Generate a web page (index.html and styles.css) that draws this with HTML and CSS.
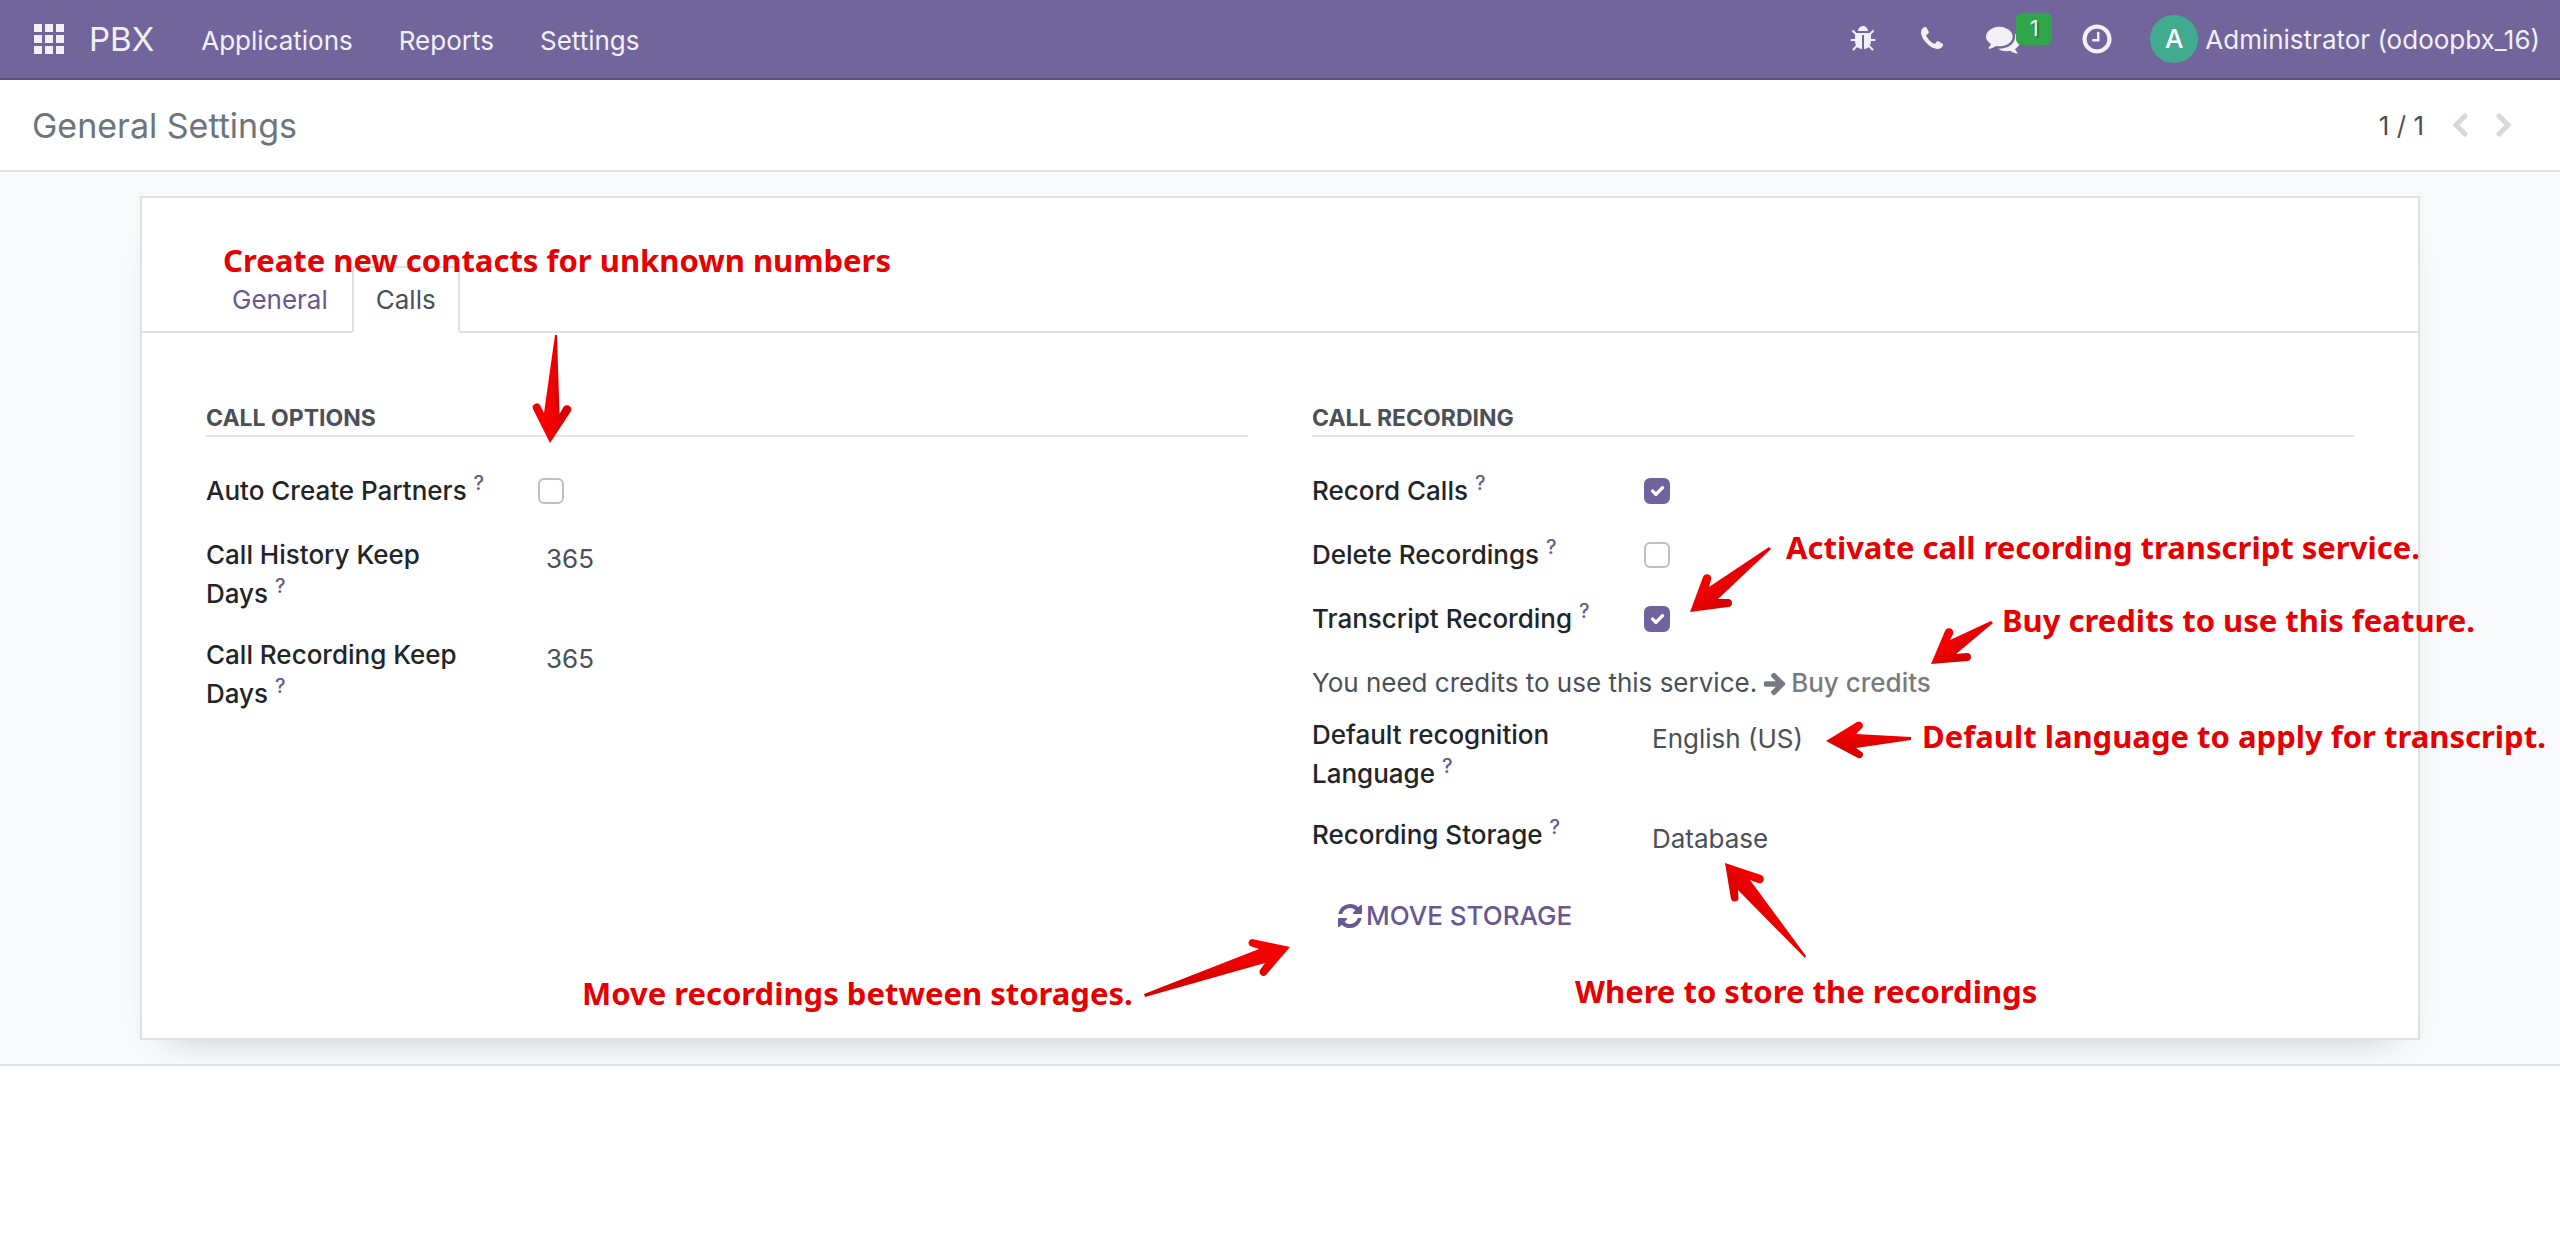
FILE: index.html
```html
<!DOCTYPE html>
<html lang="en">
<head>
<meta charset="utf-8">
<title>General Settings - PBX</title>
<link rel="stylesheet" href="styles.css">
</head>
<body>
<header class="navbar">
  <nav class="nav-main" aria-label="Main">
    <button class="apps" type="button" aria-label="Home menu">
      <svg class="icon-apps" viewBox="0 0 30 30"><path d="M0 0h8v8H0zM11 0h8v8h-8zM22 0h8v8h-8zM0 11h8v8H0zM11 11h8v8h-8zM22 11h8v8h-8zM0 22h8v8H0zM11 22h8v8h-8zM22 22h8v8h-8z"/></svg>
    </button>
    <a class="brand" href="#">PBX</a>
    <a class="nav-link" href="#">Applications</a>
    <a class="nav-link" href="#">Reports</a>
    <a class="nav-link" href="#">Settings</a>
  </nav>
  <div class="systray">
    <button class="tray" type="button" aria-label="Debug"><svg class="icon-28" viewBox="0 0 1792 1792"><path d="M1632 960q0 26-19 45t-45 19h-224q0 171-67 290l208 209q19 19 19 45t-19 45q-18 19-45 19t-45-19l-198-197q-5 5-15 13t-42 28.5-65 36.5-82 29-97 13v-896h-128v896q-51 0-101.5-13.5t-87-33-66-39-43.5-32.5l-15-14-183 207q-20 21-48 21-24 0-43-16-19-18-20.5-44.5t15.5-46.5l202-227q-58-114-58-274h-224q-26 0-45-19t-19-45 19-45 45-19h224v-294l-173-173q-19-19-19-45t19-45 45-19 45 19l173 173h844l173-173q19-19 45-19t45 19 19 45-19 45l-173 173v294h224q26 0 45 19t19 45zm-480-576h-640q0-133 93.5-226.5t226.5-93.5 226.5 93.5 93.5 226.5z"/></svg></button>
    <button class="tray" type="button" aria-label="Phone"><svg class="icon-28" viewBox="0 0 1792 1792"><path d="M1600 1240q0 27-10 70.5t-21 68.5q-21 50-122 106-94 51-186 51-27 0-53-3.5t-57.5-12.5-47-14.5-55.5-20.5-49-18q-98-35-175-83-127-79-264-216t-216-264q-48-77-83-175-3-9-18-49t-20.5-55.5-14.5-47-12.5-57.5-3.5-53q0-92 51-186 56-101 106-122 25-11 68.5-21t70.5-10q14 0 21 3 18 6 53 76 11 19 30 54t35 63.5 31 53.5q3 4 17.5 25t21.5 35.5 7 28.5q0 20-28.5 50t-62 55-62 53-28.5 46q0 9 5 22.5t8.5 20.5 14 24 11.5 19q76 137 174 235t235 174q2 1 19 11.5t24 14 20.5 8.5 22.5 5q18 0 46-28.5t53-62 55-62 50-28.5q14 0 28.5 7t35.5 21.5 25 17.5q25 15 53.5 31t63.5 35 54 30q70 35 76 53 3 7 3 21z"/></svg></button>
    <button class="tray" type="button" aria-label="Messages"><svg class="icon-34" viewBox="0 0 1792 1792"><path d="M1408 768q0 139-94 257t-256.5 186.5-353.5 68.5q-86 0-176-16-124 88-278 128-36 9-86 16h-3q-11 0-20.5-8t-11.5-21q-1-3-1-6.5t.5-6.5 2-6l2.5-5 3.5-5.5 4-5 4.5-5 4-4.5q5-6 23-25t26-29.5 22.5-29 25-38.5 20.5-44q-124-72-195-177t-71-224q0-139 94-257t256.5-186.5 353.5-68.5 353.5 68.5 256.5 186.5 94 257zm384 256q0 120-71 224.5t-195 176.5q10 24 20.5 44t25 38.5 22.5 29 26 29.5 23 25q1 1 4 4.5t4.5 5 4 5 3.5 5.5l2.5 5 2 6 .5 6.5-1 6.5q-3 14-13 22t-22 7q-50-7-86-16-154-40-278-128-90 16-176 16-271 0-472-132 58 4 88 4 161 0 309-45t264-129q125-92 192-212t67-254q0-77-23-152 129 71 204 178t75 230z"/></svg><span class="badge">1</span></button>
    <button class="tray tray-clock" type="button" aria-label="Activities"><svg class="icon-34" viewBox="0 0 1792 1792"><path d="M1024 544v448q0 14-9 23t-23 9h-320q-14 0-23-9t-9-23v-64q0-14 9-23t23-9h224v-352q0-14 9-23t23-9h64q14 0 23 9t9 23zm416 352q0-148-73-273t-198-198-273-73-273 73-198 198-73 273 73 273 198 198 273 73 273-73 198-198 73-273zm224 0q0 209-103 385.5t-279.5 279.5-385.5 103-385.5-103-279.5-279.5-103-385.5 103-385.5 279.5-279.5 385.5-103 385.5 103 279.5 279.5 103 385.5z"/></svg></button>
    <button class="user" type="button"><span class="avatar">A</span><span>Administrator (odoopbx_16)</span></button>
  </div>
</header>

<div class="control-panel">
  <h1 class="title">General Settings</h1>
  <div class="pager">
    <span class="pager-value">1 / 1</span>
    <button class="pager-btn" type="button" aria-label="Previous"><svg class="icon-chevron" viewBox="0 0 16 24"><path d="M13 3L4 12l9 9"/></svg></button>
    <button class="pager-btn" type="button" aria-label="Next"><svg class="icon-chevron" viewBox="0 0 16 24"><path d="M3 3l9 9-9 9"/></svg></button>
  </div>
</div>

<main class="content">
  <form class="sheet">
    <div class="tabs" role="tablist">
      <a class="tab" role="tab" href="#general">General</a>
      <a class="tab tab-active" role="tab" aria-selected="true" href="#calls">Calls</a>
    </div>
    <div class="groups">
      <section class="group">
        <h2 class="group-title">CALL OPTIONS</h2>
        <div class="row row-check">
          <label class="label" for="auto">Auto Create Partners <sup>?</sup></label>
          <input class="check" type="checkbox" id="auto">
        </div>
        <div class="row">
          <label class="label" for="history">Call History Keep Days <sup>?</sup></label>
          <input class="field" type="text" id="history" value="365">
        </div>
        <div class="row">
          <label class="label" for="keep">Call Recording Keep Days <sup>?</sup></label>
          <input class="field" type="text" id="keep" value="365">
        </div>
      </section>
      <section class="group">
        <h2 class="group-title">CALL RECORDING</h2>
        <div class="row row-check">
          <label class="label" for="record">Record Calls <sup>?</sup></label>
          <input class="check" type="checkbox" id="record" checked>
        </div>
        <div class="row row-check">
          <label class="label" for="delete">Delete Recordings <sup>?</sup></label>
          <input class="check" type="checkbox" id="delete">
        </div>
        <div class="row row-check">
          <label class="label" for="transcript">Transcript Recording <sup>?</sup></label>
          <input class="check" type="checkbox" id="transcript" checked>
        </div>
        <div class="credits">
          <span>You need credits to use this service.</span>
          <a class="buy" href="#"><svg class="icon-26" viewBox="0 0 1792 1792"><path d="M1600 960q0 54-37 91l-651 651q-39 37-91 37-51 0-90-37l-75-75q-38-38-38-91t38-91l293-293h-704q-52 0-84.5-37.5t-32.5-90.5v-128q0-53 32.5-90.5t84.5-37.5h704l-293-294q-38-36-38-90t38-90l75-75q38-38 90-38 53 0 91 38l651 651q37 35 37 90z"/></svg>Buy credits</a>
        </div>
        <div class="row">
          <label class="label" for="language">Default recognition Language <sup>?</sup></label>
          <select class="field" id="language"><option>English (US)</option></select>
        </div>
        <div class="row">
          <label class="label" for="storage">Recording Storage <sup>?</sup></label>
          <select class="field" id="storage"><option>Database</option></select>
        </div>
        <button class="move" type="button"><svg class="icon-28" viewBox="0 0 1792 1792"><path d="M1639 1056q0 5-1 7-64 268-268 434.5t-478 166.5q-146 0-282.5-55t-243.5-157l-129 129q-19 19-45 19t-45-19-19-45v-448q0-26 19-45t45-19h448q26 0 45 19t19 45-19 45l-137 137q71 66 161 102t187 36q134 0 250-65t186-179q11-17 53-117 8-23 30-23h192q13 0 22.5 9.5t9.5 22.5zm25-800v448q0 26-19 45t-45 19h-448q-26 0-45-19t-19-45 19-45l138-138q-148-137-349-137-134 0-250 65t-186 179q-11 17-53 117-8 23-30 23h-199q-13 0-22.5-9.5t-9.5-22.5v-7q65-268 270-434.5t480-166.5q146 0 284 55.5t245 156.5l130-129q19-19 45-19t45 19 19 45z"/></svg>MOVE STORAGE</button>
      </section>
    </div>
  </form>
</main>

<!-- Callouts drawn over the form -->
<div class="notes">
  <p class="note note-contacts">Create new contacts for unknown numbers</p>
  <p class="note note-transcript">Activate call recording transcript service.</p>
  <p class="note note-credits">Buy credits to use this feature.</p>
  <p class="note note-language">Default language to apply for transcript.</p>
  <p class="note note-move">Move recordings between storages.</p>
  <p class="note note-storage">Where to store the recordings</p>
  <svg class="arrow arrow-contacts" viewBox="530 330 44 116"><defs><linearGradient id="red" x1="0" y1="0" x2="1" y2="0"><stop offset=".45" stop-color="#f50000"/><stop offset=".75" stop-color="#d80000"/></linearGradient><linearGradient id="red-diag" x1="0" y1="0" x2="1" y2="1"><stop offset=".4" stop-color="#f50000"/><stop offset=".6" stop-color="#d80000"/></linearGradient><linearGradient id="red-down" x1="0" y1="0" x2="0" y2="1"><stop offset=".3" stop-color="#f50000"/><stop offset=".7" stop-color="#d80000"/></linearGradient><linearGradient id="red-back" x1="1" y1="0" x2="0" y2="1"><stop offset=".4" stop-color="#f50000"/><stop offset=".6" stop-color="#dc0000"/></linearGradient></defs><path fill="url(#red)" d="M555 335L544 413L540.5 406A4 4 0 0 0 533 409L550 443L570.5 412A4 4 0 0 0 563.5 407L559.5 414L557 335Z"/></svg>
  <svg class="arrow arrow-transcript" viewBox="1686 544 90 72"><path fill="url(#red-diag)" d="M1769 547L1709 587L1711 580A4 4 0 0 0 1703 577L1690 612L1728 607A4 4 0 0 0 1728 599L1718 599L1771 549Z"/></svg>
  <svg class="arrow arrow-credits" viewBox="1926 616 72 52"><path fill="url(#red-diag)" d="M1991 621L1950 640L1953 634A4 4 0 0 0 1945 631L1931 664L1967 661A4 4 0 0 0 1967 653L1956 654L1993 623Z"/></svg>
  <svg class="arrow arrow-language" viewBox="1820 716 96 48"><path fill="url(#red-down)" d="M1911 737L1856 734L1862 728A4 4 0 0 0 1857 722L1826 741L1858 758A4 4 0 0 0 1863 753L1856 748L1911 740Z"/></svg>
  <svg class="arrow arrow-storage" viewBox="1720 858 92 104"><path fill="url(#red-back)" d="M1806 956L1750 880L1758 883A4 4 0 0 0 1761 875L1725 863L1731 899A4 4 0 0 0 1738.5 899L1738 890L1805 958Z"/></svg>
  <svg class="arrow arrow-move" viewBox="1140 934 154 66"><path fill="url(#red-down)" d="M1145 997L1265 963L1260 970A4 4 0 0 0 1266 975L1290 947L1252 939A4 4 0 0 0 1250 946L1259 949L1144 994Z"/></svg>
</div>
</body>
</html>
```
FILE: styles.css
```css
* { box-sizing: border-box; }

body {
  position: relative;
  margin: 0;
  background: #fff;
  color: #495057;
  font: 26px/39px Inter, "Liberation Sans", sans-serif;
}

button, input, select {
  margin: 0;
  padding: 0;
  border: 0;
  background: none;
  color: inherit;
  font: inherit;
}

a { color: inherit; text-decoration: none; }
svg { display: block; flex: none; fill: currentColor; }

.icon-apps { width: 30px; height: 30px; }
.icon-26 { width: 26px; height: 26px; }
.icon-28 { width: 28px; height: 28px; }
.icon-34 { width: 34px; height: 34px; }
.icon-chevron {
  width: 16px;
  height: 24px;
  fill: none;
  stroke: #d5d9dd;
  stroke-width: 5;
  stroke-linecap: round;
}

/* Top bar */
.navbar {
  display: flex;
  justify-content: space-between;
  height: 80px;
  padding: 0 20px 0 34px;
  border-bottom: 2px solid #5a4f7f;
  background: #71659c;
  color: #f1f0f5;
}
.nav-main, .systray { display: flex; align-items: center; }
.brand { margin: 0 24px 0 25px; font-size: 33px; }
.nav-link { padding: 2px 23px 0; }
.tray { position: relative; margin-right: 40px; }
.tray-clock { margin: 0 36px 0 20px; }
.badge {
  position: absolute;
  left: 30px;
  top: -9px;
  width: 36px;
  height: 32px;
  border-radius: 6px;
  background: #30a64a;
  font-size: 22px;
  line-height: 30px;
  text-align: center;
  text-shadow: 2px 2px 0 rgba(0, 0, 0, .25);
}
.user { display: flex; align-items: center; gap: 7px; }
.avatar {
  width: 48px;
  height: 48px;
  border-radius: 50%;
  background: #41ab8f;
  color: #fff;
  line-height: 48px;
  font-weight: 500;
}

/* Title and pager */
.control-panel {
  display: flex;
  align-items: center;
  justify-content: space-between;
  height: 92px;
  padding: 0 48px 0 32px;
  border-bottom: 2px solid #dee2e6;
}
.title { margin: 0; color: #6c757d; font-size: 34px; font-weight: 400; }
.pager { display: flex; align-items: center; gap: 28px; }

/* Form */
.content {
  padding: 24px 140px;
  border-bottom: 2px solid #dee2e6;
  background: #f8f9fa;
  overflow: hidden;
}
.sheet {
  padding: 68px 0 89px;
  border: 2px solid #dee2e6;
  background: #fff;
  box-shadow: 0 20px 40px -30px rgba(0, 0, 0, .3);
}
.tabs {
  display: flex;
  padding: 0 66px;
  border-bottom: 2px solid #dee2e6;
}
.tab {
  margin-bottom: -2px;
  padding: 12px 22px;
  border: 2px solid transparent;
  color: #665891;
}
.tab-active {
  border-color: #dee2e6 #dee2e6 #fff;
  color: #495057;
}
.groups {
  display: grid;
  grid-template-columns: 1fr 1fr;
  gap: 64px;
  padding: 68px 64px 0;
}
.group-title {
  margin: 0 0 22px;
  border-bottom: 2px solid #e3e4e5;
  font-size: 23px;
  font-weight: 700;
  line-height: 34px;
}
.row {
  display: grid;
  grid-template-columns: 280px 1fr;
  column-gap: 52px;
  align-items: start;
  padding: 12px 0 10px;
}
.row-check { padding-bottom: 13px; }
.label { color: #212529; font-weight: 500; }
.label sup {
  color: #665891;
  font-size: 20px;
  line-height: 0;
}
.check {
  width: 26px;
  height: 26px;
  margin-top: 7px;
  border: 2px solid #bfbfbf;
  border-radius: 6px;
  appearance: none;
}
.check:checked {
  border-color: #71639e;
  background: #71639e url("data:image/svg+xml,%3csvg xmlns='http://www.w3.org/2000/svg' viewBox='0 0 20 20'%3e%3cpath fill='none' stroke='%23fff' stroke-linecap='round' stroke-linejoin='round' stroke-width='3' d='M6 10l3 3l6-6'/%3e%3c/svg%3e") center / contain no-repeat;
}
.field {
  height: 39px;
  margin-top: 4px;
  padding: 0 8px;
  appearance: none;
}
.credits { display: flex; gap: 5px; padding: 12px 0 1px; }
.buy {
  display: flex;
  align-items: center;
  gap: 3px;
  color: #777b7f;
  font-weight: 500;
}
.move {
  display: flex;
  align-items: center;
  gap: 2px;
  margin-top: 14px;
  padding: 14px 24px;
  color: #665891;
  font-weight: 500;
}

/* Callouts */
.notes { position: absolute; inset: 0; pointer-events: none; }
.note {
  position: absolute;
  margin: 0;
  color: #e60000;
  font: 700 31px/44px "Noto Sans", "Open Sans", sans-serif;
  white-space: nowrap;
}
.note-contacts { left: 223px; top: 238px; }
.note-transcript { left: 1786px; top: 525px; }
.note-credits { left: 2002px; top: 598px; }
.note-language { left: 1922px; top: 714px; }
.note-move { left: 582px; top: 971px; }
.note-storage { left: 1575px; top: 969px; }
.arrow { position: absolute; }
.arrow-contacts { left: 530px; top: 330px; width: 44px; height: 116px; }
.arrow-transcript { left: 1686px; top: 544px; width: 90px; height: 72px; }
.arrow-credits { left: 1926px; top: 616px; width: 72px; height: 52px; }
.arrow-language { left: 1820px; top: 716px; width: 96px; height: 48px; }
.arrow-storage { left: 1720px; top: 858px; width: 92px; height: 104px; }
.arrow-move { left: 1140px; top: 934px; width: 154px; height: 66px; }
```
